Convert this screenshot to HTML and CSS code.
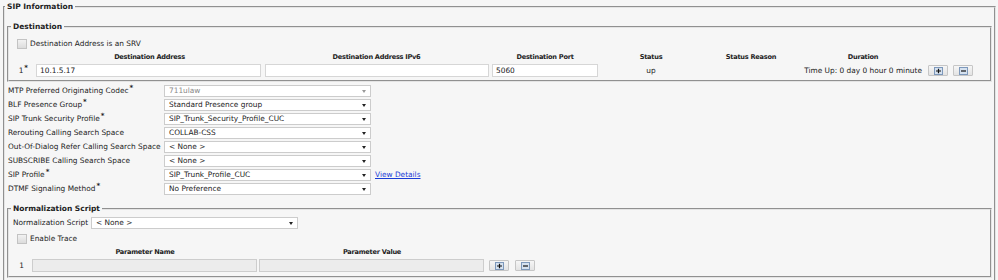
FILE: index.html
```html
<!DOCTYPE html>
<html>
<head>
    <title>SIP Information</title>
    <meta charset="utf-8">
    <link rel="stylesheet" href="styles.css">
</head>
<body>
    <fieldset class="group">
        <legend>SIP Information</legend>

        <fieldset class="sub dest">
            <legend>Destination</legend>
            <label class="check"><span class="box"></span>Destination Address is an SRV</label>
            <div class="dest-grid">
                <span></span>
                <b>Destination Address</b>
                <b>Destination Address IPv6</b>
                <b>Destination Port</b>
                <b>Status</b>
                <b>Status Reason</b>
                <b>Duration</b>
                <span></span>

                <span class="idx">1<sup class="req">*</sup></span>
                <input class="addr" type="text" value="10.1.5.17">
                <input class="addr6" type="text" value="">
                <input class="port" type="text" value="5060">
                <span class="mid">up</span>
                <span></span>
                <span class="dur">Time Up: 0 day 0 hour 0 minute</span>
                <span class="btns">
                    <button class="ico"><svg width="9" height="8" viewBox="0 0 9 8"><rect x="0.5" y="0.5" width="8" height="7" fill="#d5e1ef" stroke="#7d98bb"/><path d="M2 4H7M4.5 1.8V6.2" stroke="#111" stroke-width="1.2"/></svg></button>
                    <button class="ico"><svg width="9" height="8" viewBox="0 0 9 8"><rect x="0.5" y="0.5" width="8" height="7" fill="#d5e1ef" stroke="#7d98bb"/><path d="M2 4H7" stroke="#111" stroke-width="1.2"/></svg></button>
                </span>
            </div>
        </fieldset>

        <div class="fields">
            <span>MTP Preferred Originating Codec<sup class="req">*</sup></span>
            <div class="select off"><span>711ulaw</span><i class="arrow"></i></div>
            <span></span>

            <span>BLF Presence Group<sup class="req">*</sup></span>
            <div class="select"><span>Standard Presence group</span><i class="arrow"></i></div>
            <span></span>

            <span>SIP Trunk Security Profile<sup class="req">*</sup></span>
            <div class="select"><span>SIP_Trunk_Security_Profile_CUC</span><i class="arrow"></i></div>
            <span></span>

            <span>Rerouting Calling Search Space</span>
            <div class="select"><span>COLLAB-CSS</span><i class="arrow"></i></div>
            <span></span>

            <span>Out-Of-Dialog Refer Calling Search Space</span>
            <div class="select"><span>&lt; None &gt;</span><i class="arrow"></i></div>
            <span></span>

            <span>SUBSCRIBE Calling Search Space</span>
            <div class="select"><span>&lt; None &gt;</span><i class="arrow"></i></div>
            <span></span>

            <span>SIP Profile<sup class="req">*</sup></span>
            <div class="select"><span>SIP_Trunk_Profile_CUC</span><i class="arrow"></i></div>
            <a href="#" class="link">View Details</a>

            <span>DTMF Signaling Method<sup class="req">*</sup></span>
            <div class="select"><span>No Preference</span><i class="arrow"></i></div>
            <span></span>
        </div>

        <fieldset class="sub norm">
            <legend>Normalization Script</legend>
            <div class="norm-row">
                <span class="norm-label">Normalization Script</span>
                <div class="select"><span>&lt; None &gt;</span><i class="arrow"></i></div>
            </div>
            <label class="check trace"><span class="box"></span>Enable Trace</label>
            <div class="param-grid">
                <span></span>
                <b>Parameter Name</b>
                <b>Parameter Value</b>
                <span></span>

                <span class="mid">1</span>
                <input class="pname" type="text" disabled>
                <input class="pvalue" type="text" disabled>
                <span class="btns">
                    <button class="ico"><svg width="9" height="8" viewBox="0 0 9 8"><rect x="0.5" y="0.5" width="8" height="7" fill="#d5e1ef" stroke="#7d98bb"/><path d="M2 4H7M4.5 1.8V6.2" stroke="#111" stroke-width="1.2"/></svg></button>
                    <button class="ico"><svg width="9" height="8" viewBox="0 0 9 8"><rect x="0.5" y="0.5" width="8" height="7" fill="#d5e1ef" stroke="#7d98bb"/><path d="M2 4H7" stroke="#111" stroke-width="1.2"/></svg></button>
                </span>
            </div>
        </fieldset>
    </fieldset>
</body>
</html>
```

FILE: styles.css
```css
body {
    margin: 0;
    padding: 1px 2px 0 3px;
    font-family: "DejaVu Sans", Verdana, sans-serif;
    font-size: 7.4px;
    line-height: 12px;
    color: #222;
    background-color: #f6f6f6;
}
fieldset {
    margin: 0;
    padding: 0 2px;
    min-width: 0;
    border: 2px groove #e4e4e4;
}
legend {
    padding: 0 2px;
    font-size: 7.5px;
    font-weight: bold;
    line-height: 12px;
}
.group {
    padding-bottom: 20px;
}
.group > legend {
    margin-left: -2px;
}
.dest {
    margin-top: 8px;
    padding-bottom: 3px;
}
.check {
    display: flex;
    align-items: center;
    height: 12px;
    margin-left: 6px;
}
.dest .check {
    margin-top: 5px;
}
.box {
    width: 8px;
    height: 8px;
    margin-right: 3px;
    border: 1px solid #c3c3c3;
    background: linear-gradient(#f2f2f2, #dcdcdc);
}
.req {
    font-size: 7px;
    font-weight: bold;
    line-height: 1;
    vertical-align: top;
    margin-left: 1px;
}
input {
    box-sizing: border-box;
    height: 13px;
    margin: 0;
    padding: 0 3px;
    font-family: inherit;
    font-size: inherit;
    color: #222;
    background: #fff;
    border: 1px solid #d6d6d6;
    outline: none;
}
input:disabled {
    background: #ececec;
    border-color: #cdcdcd;
}
.dest-grid {
    display: grid;
    grid-template-columns: 25px 227px 227px 110px 102px 98px 126px auto;
    grid-template-rows: 12px 13px;
    row-gap: 1px;
    margin-top: 1px;
    align-items: center;
}
.dest-grid b,
.param-grid b {
    font-size: 6.6px;
    letter-spacing: -0.25px;
    text-align: center;
}
.idx {
    text-align: right;
    padding-right: 8px;
}
.mid {
    text-align: center;
}
.addr {
    width: 225px;
}
.addr6 {
    width: 224px;
    margin-left: 2px;
}
.port {
    width: 106px;
    margin-left: 2px;
}
.dur {
    text-align: right;
    padding-right: 4px;
}
.btns {
    display: flex;
    gap: 5px;
    padding-left: 2px;
}
.ico {
    display: flex;
    align-items: center;
    justify-content: center;
    width: 20px;
    height: 11px;
    padding: 0;
    margin: 0;
    border: 1px solid #c6c6c6;
    border-radius: 1px;
    background: linear-gradient(#f6f6f6, #e3e3e3);
}
.fields {
    display: grid;
    grid-template-columns: 156px 207px auto;
    grid-auto-rows: 14px;
    align-items: center;
    margin-top: 2px;
    padding-left: 1px;
}
.select {
    box-sizing: border-box;
    display: flex;
    align-items: center;
    justify-content: space-between;
    width: 207px;
    height: 12px;
    padding: 0 4px;
    background: #fff;
    border: 1px solid #cccccc;
}
.select.off {
    color: #888;
}
.arrow {
    width: 0;
    height: 0;
    border-top: 3px solid #222;
    border-left: 2.5px solid transparent;
    border-right: 2.5px solid transparent;
}
.select.off .arrow {
    border-top-color: #999;
}
.link {
    margin-left: 4px;
    color: #1a3cd6;
    text-decoration: underline;
}
.norm {
    margin-top: 7px;
    padding-bottom: 4px;
}
.norm-row {
    display: flex;
    align-items: center;
    height: 14px;
    margin-top: 1px;
    padding-left: 2px;
}
.norm-label {
    width: 78px;
}
.trace {
    height: 14px;
    margin-top: 2px;
}
.param-grid {
    display: grid;
    grid-template-columns: 21px 226px 228px auto;
    grid-template-rows: 12px 13px;
    row-gap: 1px;
    align-items: center;
}
.pname {
    width: 225px;
}
.pvalue {
    width: 225px;
    margin-left: 1px;
}
.param-grid .btns {
    gap: 6px;
    padding-left: 3px;
}
```
